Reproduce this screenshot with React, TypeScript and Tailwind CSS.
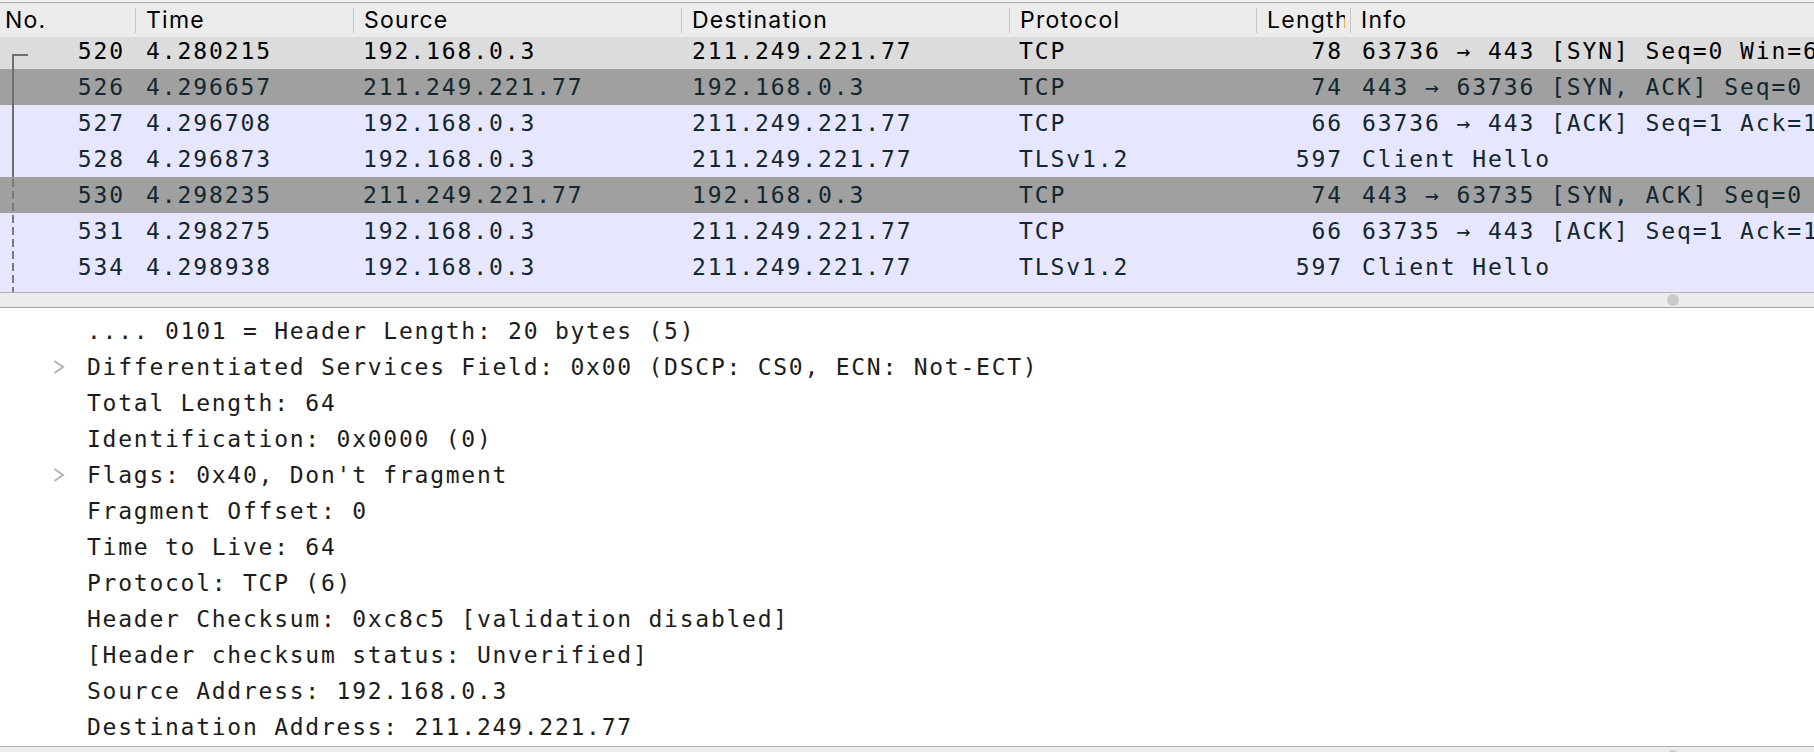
import React from 'react';

type Kind = 'sel' | 'syn' | 'tcp';

interface Packet {
  no: string;
  time: string;
  src: string;
  dst: string;
  proto: string;
  len: string;
  info: string;
  kind: Kind;
}

const packets: Packet[] = [
  { no: '520', time: '4.280215', src: '192.168.0.3', dst: '211.249.221.77', proto: 'TCP', len: '78', info: '63736 → 443 [SYN] Seq=0 Win=65535 Len=0 MSS=1460 WS=64', kind: 'sel' },
  { no: '526', time: '4.296657', src: '211.249.221.77', dst: '192.168.0.3', proto: 'TCP', len: '74', info: '443 → 63736 [SYN, ACK] Seq=0 Ack=1 Win=28960 Len=0', kind: 'syn' },
  { no: '527', time: '4.296708', src: '192.168.0.3', dst: '211.249.221.77', proto: 'TCP', len: '66', info: '63736 → 443 [ACK] Seq=1 Ack=1 Win=131712 Len=0', kind: 'tcp' },
  { no: '528', time: '4.296873', src: '192.168.0.3', dst: '211.249.221.77', proto: 'TLSv1.2', len: '597', info: 'Client Hello', kind: 'tcp' },
  { no: '530', time: '4.298235', src: '211.249.221.77', dst: '192.168.0.3', proto: 'TCP', len: '74', info: '443 → 63735 [SYN, ACK] Seq=0 Ack=1 Win=28960 Len=0', kind: 'syn' },
  { no: '531', time: '4.298275', src: '192.168.0.3', dst: '211.249.221.77', proto: 'TCP', len: '66', info: '63735 → 443 [ACK] Seq=1 Ack=1 Win=131712 Len=0', kind: 'tcp' },
  { no: '534', time: '4.298938', src: '192.168.0.3', dst: '211.249.221.77', proto: 'TLSv1.2', len: '597', info: 'Client Hello', kind: 'tcp' },
  { no: '536', time: '4.313420', src: '211.249.221.77', dst: '192.168.0.3', proto: 'TCP', len: '66', info: '63736 → 443 [ACK] Seq=1 Ack=532 Win=30080 Len=0', kind: 'tcp' },
];

const details: { text: string; arrow?: boolean }[] = [
  { text: '.... 0101 = Header Length: 20 bytes (5)' },
  { text: 'Differentiated Services Field: 0x00 (DSCP: CS0, ECN: Not-ECT)', arrow: true },
  { text: 'Total Length: 64' },
  { text: 'Identification: 0x0000 (0)' },
  { text: "Flags: 0x40, Don't fragment", arrow: true },
  { text: 'Fragment Offset: 0' },
  { text: 'Time to Live: 64' },
  { text: 'Protocol: TCP (6)' },
  { text: 'Header Checksum: 0xc8c5 [validation disabled]' },
  { text: '[Header checksum status: Unverified]' },
  { text: 'Source Address: 192.168.0.3' },
  { text: 'Destination Address: 211.249.221.77' },
];

const rowColors: Record<Kind, string> = {
  sel: 'bg-[#dcdcdc] text-black',
  syn: 'bg-[#a0a0a0] text-[#12272e]',
  tcp: 'bg-[#e7e6ff] text-[#12272e]',
};

const cols = 'grid grid-cols-[135px_218px_328px_328px_247px_94px_1fr]';

const HeaderCell = ({ label, first }: { label: string; first?: boolean }) => (
  <div className="flex items-center overflow-hidden whitespace-nowrap pr-[5px]">
    {!first && <div className="w-px h-[25px] bg-[#c6c6c6] shrink-0" />}
    <span className={`min-w-0 overflow-hidden ${first ? 'ml-[5px]' : 'ml-[10px]'}`}>{label}</span>
  </div>
);

const App: React.FC = () => {
  return (
    <div className="w-[1814px] h-[752px] overflow-hidden bg-white flex flex-col">
      {/* Column header */}
      <div className="h-[2px] bg-[#f3f3f3]" />
      <div className={`${cols} h-[35px] shrink-0 border-t border-[#a9a9a9] bg-[#ececec] font-['Inter',sans-serif] text-[23px] tracking-[1.25px] text-black`}>
        <HeaderCell label="No." first />
        <HeaderCell label="Time" />
        <HeaderCell label="Source" />
        <HeaderCell label="Destination" />
        <HeaderCell label="Protocol" />
        <HeaderCell label="Length" />
        <HeaderCell label="Info" />
      </div>

      {/* Packet list */}
      <div className="relative h-[255px] shrink-0 overflow-hidden bg-[#e7e6ff] font-['DejaVu_Sans_Mono',monospace] text-[23px] tracking-[1.9px]">
        <div className="mt-[-4px]">
          {packets.map((p) => (
            <div key={p.no} className={`${cols} h-[36px] leading-[36px] whitespace-nowrap ${rowColors[p.kind]}`}>
              <div className="text-right pr-[10px] overflow-hidden">{p.no}</div>
              <div className="pl-[11px] overflow-hidden">{p.time}</div>
              <div className="pl-[10px] overflow-hidden">{p.src}</div>
              <div className="pl-[11px] overflow-hidden">{p.dst}</div>
              <div className="pl-[10px] overflow-hidden">{p.proto}</div>
              <div className="text-right pr-[7px] overflow-hidden">{p.len}</div>
              <div className="pl-[12px] overflow-hidden">{p.info}</div>
            </div>
          ))}
        </div>
        {/* related packets line */}
        <svg className="absolute left-0 top-0" width="30" height="255">
          <line x1="12" y1="18" x2="28" y2="18" stroke="#6f6f6f" strokeWidth="2" />
          <line x1="13" y1="17" x2="13" y2="140" stroke="#6f6f6f" strokeWidth="2" />
          <line x1="13" y1="142" x2="13" y2="255" stroke="#7a7a7a" strokeWidth="2" strokeDasharray="8 4" />
        </svg>
      </div>

      {/* Splitter / horizontal scroll */}
      <div className="h-[16px] shrink-0 border-t border-b border-t-[#b4b4b4] border-b-[#a6a6a6] bg-[#ececec] flex items-center justify-end pr-[135px]">
        <div className="w-[12px] h-[12px] rounded-full bg-[#cbcbcb]" />
      </div>

      {/* Packet details */}
      <div className="h-[438px] shrink-0 overflow-hidden pt-[5px] bg-white font-['DejaVu_Sans_Mono',monospace] text-[23px] tracking-[1.75px] text-[#1c1c1c] whitespace-nowrap">
        {details.map((d, i) => (
          <div key={i} className="flex h-[36px] items-center pl-[53px]">
            <div className="w-[34px] shrink-0 flex items-center">
              {d.arrow && (
                <svg width="12" height="14" viewBox="0 0 12 14">
                  <polyline points="1.5,1 10,7 1.5,13" fill="none" stroke="#b3b3b3" strokeWidth="2" />
                </svg>
              )}
            </div>
            <span className="leading-[36px]">{d.text}</span>
          </div>
        ))}
      </div>

      {/* bottom scroll */}
      <div className="relative h-[6px] shrink-0 overflow-hidden border-t border-[#b0b0b0] bg-[#ececec]">
        <div className="absolute left-[1667px] top-[3px] w-[12px] h-[12px] rounded-full bg-[#cbcbcb]" />
      </div>
    </div>
  );
};

export default App;
